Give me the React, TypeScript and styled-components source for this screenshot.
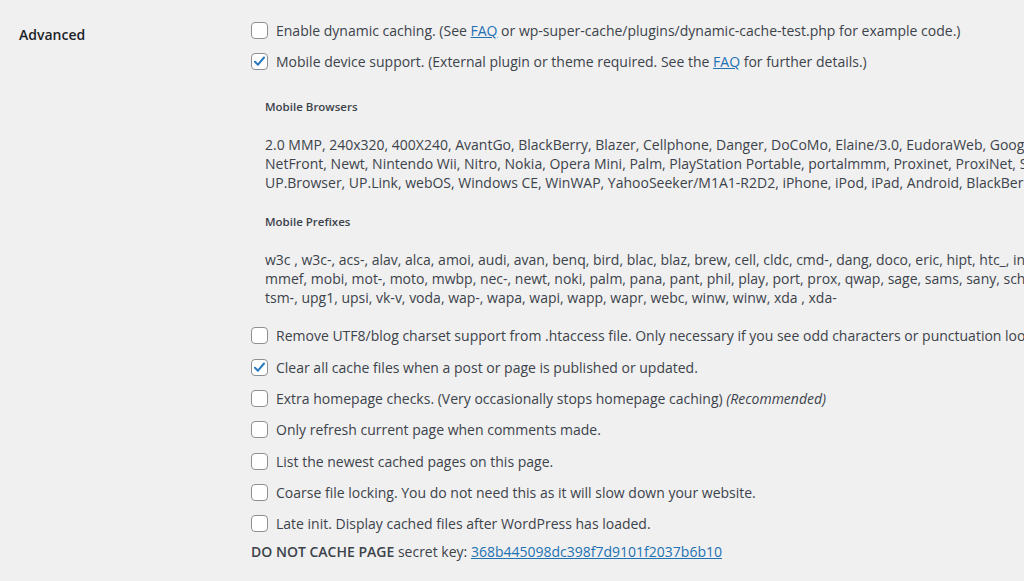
import React from "react";
import styled, { createGlobalStyle } from "styled-components";

const GlobalStyle = createGlobalStyle`
  html, body {
    margin: 0;
    padding: 0;
    background: #f0f0f1;
    overflow: hidden;
  }
  body {
    font-family: "Open Sans", "Noto Sans", sans-serif;
    color: #3c434a;
    font-size: 14px;
  }
`;

const browsers = [
  "2.0 MMP, 240x320, 400X240, AvantGo, BlackBerry, Blazer, Cellphone, Danger, DoCoMo, Elaine/3.0, EudoraWeb, Googlebot-Mobile, hiptop, IEMobile, KYOCERA/WX310K, LG/U990,",
  "NetFront, Newt, Nintendo Wii, Nitro, Nokia, Opera Mini, Palm, PlayStation Portable, portalmmm, Proxinet, ProxiNet, SHARP-TQ-GX10, SHG-i900, Small, SonyEricsson,",
  "UP.Browser, UP.Link, webOS, Windows CE, WinWAP, YahooSeeker/M1A1-R2D2, iPhone, iPod, iPad, Android, BlackBerry9530, LG-TU915 Obigo, LGE VX, webOS, Nokia5800",
];

const prefixes = [
  "w3c , w3c-, acs-, alav, alca, amoi, audi, avan, benq, bird, blac, blaz, brew, cell, cldc, cmd-, dang, doco, eric, hipt, htc_, inno, ipaq, ipod, jigs, kddi, keji,",
  "mmef, mobi, mot-, moto, mwbp, nec-, newt, noki, palm, pana, pant, phil, play, port, prox, qwap, sage, sams, sany, sch-, sec-, send, seri, sgh-, shar, sie-,",
  "tsm-, upg1, upsi, vk-v, voda, wap-, wapa, wapi, wapp, wapr, webc, winw, winw, xda , xda-",
];

const Check = ({ checked }: { checked?: boolean }) => (
  <Box>
    {checked && (
      <svg width="13" height="13" viewBox="0 0 13 13">
        <path
          d="M2 6.8l3 2.9 6-7.2"
          fill="none"
          stroke="#2a78bd"
          strokeWidth="2"
          strokeLinecap="round"
          strokeLinejoin="round"
        />
      </svg>
    )}
  </Box>
);

const Option = ({
  checked,
  children,
}: {
  checked?: boolean;
  children: React.ReactNode;
}) => (
  <Row>
    <Check checked={checked} />
    <RowText>{children}</RowText>
  </Row>
);

const App = () => {
  return (
    <>
      <GlobalStyle />
      <FormTable>
        <Label>Advanced</Label>
        <Field>
          <Option>
            Enable dynamic caching. (See <Link>FAQ</Link> or
            wp-super-cache/plugins/dynamic-cache-test.php for example code.)
          </Option>
          <Option checked>
            Mobile device support. (External plugin or theme required. See the{" "}
            <Link>FAQ</Link> for further details.)
          </Option>
          <MobileBlock>
            <SubHeading>Mobile Browsers</SubHeading>
            <List>
              {browsers.map((l) => (
                <Line key={l}>{l}</Line>
              ))}
            </List>
            <SubHeading>Mobile Prefixes</SubHeading>
            <List>
              {prefixes.map((l) => (
                <Line key={l}>{l}</Line>
              ))}
            </List>
          </MobileBlock>
          <Option>
            Remove UTF8/blog charset support from .htaccess file. Only necessary
            if you see odd characters or punctuation looks incorrect. Requires
            rewrite rules update.
          </Option>
          <Option checked>
            Clear all cache files when a post or page is published or updated.
          </Option>
          <Option>
            Extra homepage checks. (Very occasionally stops homepage caching){" "}
            <em>(Recommended)</em>
          </Option>
          <Option>Only refresh current page when comments made.</Option>
          <Option>List the newest cached pages on this page.</Option>
          <Option>
            Coarse file locking. You do not need this as it will slow down your
            website.
          </Option>
          <Option>
            Late init. Display cached files after WordPress has loaded.
          </Option>
          <SecretKey>
            <strong>DO NOT CACHE PAGE</strong> secret key:{" "}
            <Link>368b445098dc398f7d9101f2037b6b10</Link>
          </SecretKey>
        </Field>
      </FormTable>
    </>
  );
};

const FormTable = styled.div`
  display: grid;
  grid-template-columns: 251px 1fr;
  width: 1024px;
`;

const Label = styled.div`
  padding: 25px 0 0 19px;
  font-weight: 600;
  font-size: 14px;
  line-height: 19px;
  color: #1d2327;
`;

const Field = styled.div`
  padding-top: 14.6px;
  display: flex;
  flex-direction: column;
  min-width: 0;
  overflow: hidden;
`;

const Row = styled.label`
  display: flex;
  align-items: center;
  height: 31.3px;
  white-space: nowrap;
`;

const Box = styled.span`
  flex: none;
  box-sizing: border-box;
  width: 17px;
  height: 17px;
  margin-right: 8px;
  border: 1px solid #8c8f94;
  border-radius: 4px;
  background: #fff;
  display: flex;
  align-items: center;
  justify-content: center;
`;

const RowText = styled.span`
  line-height: 19px;

  em {
    font-style: italic;
  }
`;

const Link = styled.a`
  color: #2271b1;
  text-decoration: underline;
  cursor: pointer;
`;

const MobileBlock = styled.div`
  padding-left: 14px;
  padding-bottom: 13px;
`;

const SubHeading = styled.div`
  margin-top: 20px;
  font-size: 11.5px;
  font-weight: 600;
  line-height: 19px;
  color: #3c434a;
`;

const List = styled.div`
  margin-top: 19px;
`;

const Line = styled.div`
  white-space: nowrap;
  line-height: 19px;
`;

const SecretKey = styled.div`
  margin-top: 3px;
  line-height: 19px;
  white-space: nowrap;

  strong {
    font-weight: 600;
  }
`;

export default App;
